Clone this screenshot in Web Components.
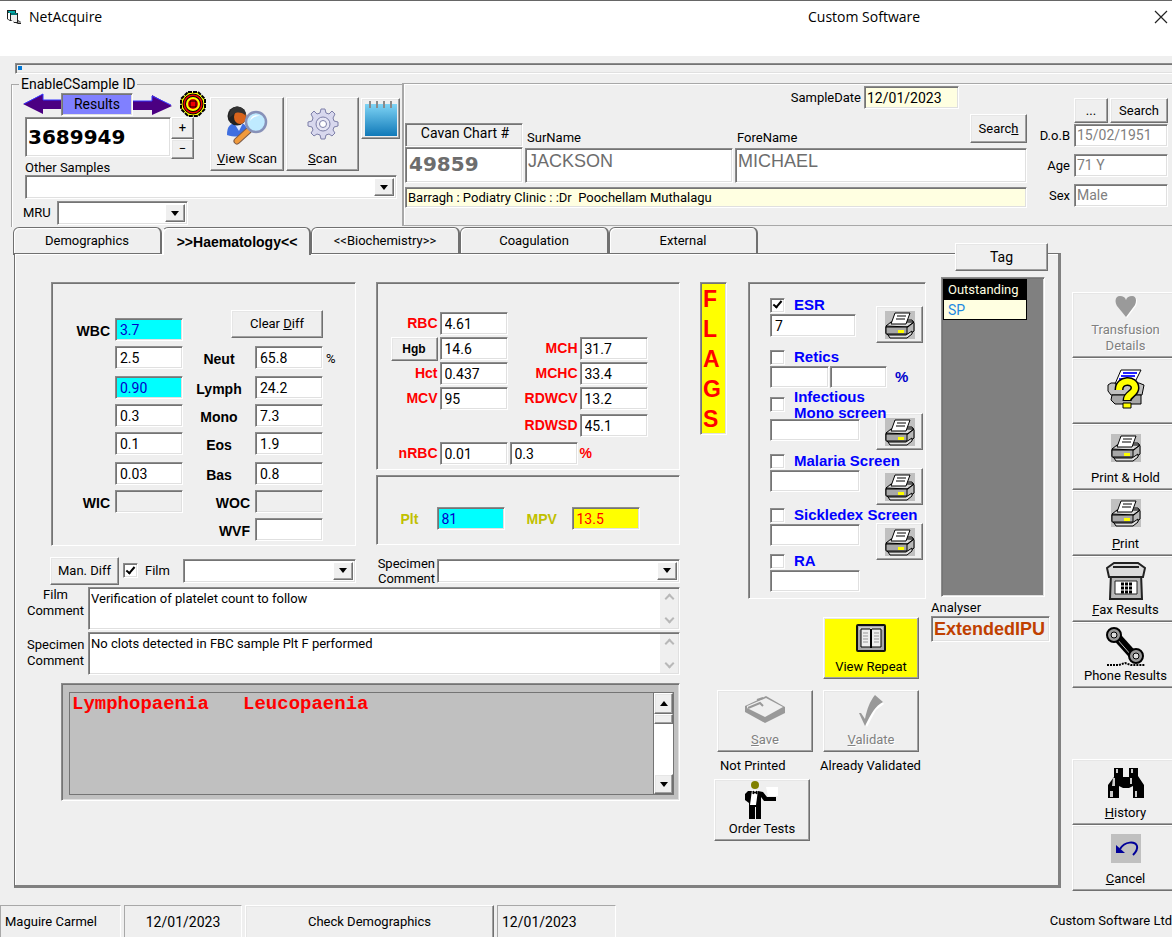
<!DOCTYPE html>
<html lang="en">
<head>
<meta charset="utf-8">
<title>NetAcquire</title>
<style>
  html, body { margin: 0; height: 100%; }
  body { background: #efefef; color: #000; font: 13px/16px Roboto, "Liberation Sans", sans-serif; overflow-x: hidden; }
</style>
</head>
<body>
<net-acquire></net-acquire>
<script>
/* Shared classic-look rules, included in every shadow root */
const BASE = `
  * { box-sizing: border-box; }
  :host { display: block; box-sizing: border-box; }
  input, textarea, select, button { font: inherit; color: inherit; margin: 0; border-radius: 0; min-width: 0; outline: 0; }
  .sunk, input:not([type=checkbox]), textarea, .combo {
    border: 1px solid #8c8c8c; border-right-color: #fff; border-bottom-color: #fff;
    box-shadow: inset 1px 1px #747474, inset -1px -1px #e0e0e0; }
  input:not([type=checkbox]) { background: #fff; height: 23px; padding: 1px 4px 0; width: 68px; font-size: 14px; }
  button { background: #efefef; padding: 0; border: 1px solid #fff; border-right-color: #707070; border-bottom-color: #707070;
    box-shadow: inset -1px -1px #a0a0a0, inset 1px 1px #e6e6e6; }
  textarea { display: block; resize: none; overflow: hidden; background: #fff; }
  .combo { display: grid; background: #fff; height: 24px; }
  .combo select { grid-area: 1/1; appearance: none; border: 0; background: none; width: 100%; padding: 0 4px; }
  .combo i { grid-area: 1/1; justify-self: end; pointer-events: none; width: 20px; margin: 2px; background: #efefef;
    border: 1px solid #fff; border-right-color: #707070; border-bottom-color: #707070; box-shadow: inset -1px -1px #a0a0a0;
    display: grid; place-items: center; }
  .combo i::after { content: ""; border: 4px solid transparent; border-top: 5px solid #000; border-bottom: 0; }
  input[type=checkbox] { appearance: none; flex: none; width: 15px; height: 15px; background: #fff; display: grid; place-items: center;
    border: 1px solid #8c8c8c; border-right-color: #fff; border-bottom-color: #fff; box-shadow: inset 1px 1px #747474, inset -1px -1px #e0e0e0; }
  input[type=checkbox]:checked::after { content: ""; width: 3px; height: 7px; margin-bottom: 3px; border: solid #000; border-width: 0 2px 2px 0; transform: rotate(40deg); }
  .b { font-family: "Liberation Sans", sans-serif; font-weight: 700; font-size: 14px; }
  .low { background: #0ff !important; color: #00c; }
  .high { background: #ff0 !important; color: #f00; }
`;
function element(name, css, html) {
  const t = document.createElement('template');
  t.innerHTML = `<style>${BASE}${css}</style>${html}`;
  customElements.define(name, class extends HTMLElement {
    constructor() { super(); this.attachShadow({ mode: 'open' }).append(t.content.cloneNode(true)); }
  });
}

const ICONS = {
  app: [16, 16, `<path d="M1 1h9v3h2v7l3 2v2h-3l-2-1H8l-1-2H4L1 10z" fill="#222"/><path d="M2 4h2v7l-2-1z" fill="#fff"/><path d="M2 2h7v2H3z" fill="#0aa"/><path d="M5 6h6v7H8l-3-2z" fill="#eee"/><path d="M5 4h6v2H5z" fill="#077"/><path d="M12 12l3 1v1h-3z" fill="#999"/>`],
  close: [14, 14, `<path d="M1 1l12 12M13 1L1 13" stroke="#222" stroke-width="1.2" fill="none"/>`],
  left: [38, 22, `<path d="M0 11L20 1v6h18v9H20v5z" fill="#4b0082"/><path d="M1 11L20 1v6h18" stroke="#33f" fill="none"/>`],
  right: [39, 22, `<path d="M39 13L19 22v-5H0V8h19V2z" fill="#4b0082"/><path d="M0 8h19V3l19 9" stroke="#33f" fill="none"/>`],
  target: [26, 26, `<path d="M8 1h10l7 7v10l-7 7H8l-7-7V8z" fill="#ff0" stroke="#000" stroke-width="2" stroke-dasharray="4 1"/><circle cx="13" cy="13" r="10" fill="#e00" stroke="#000"/><circle cx="13" cy="13" r="6" fill="none" stroke="#000" stroke-width="4"/><circle cx="13" cy="13" r="6" fill="#e00" stroke="#ff0" stroke-width="2"/><path d="M10 10h6v6h-6z" fill="#e00" stroke="#000"/>`],
  person: [42, 42, `<path d="M1 31c0-9 3-12 11-12s9 3 9 12c-5 2-14 2-20 0z" fill="#3f6fe0"/><path d="M8 19l5 8 4-8z" fill="#dfe9ff"/><circle cx="11" cy="12" r="9.500" fill="#222"/><ellipse cx="14" cy="13" rx="6" ry="7" fill="#d8641c"/><path d="M3 14C3 5 9 1 14 3s6 5 5 8c-4-3-8-3-11-1z" fill="#333"/><path d="M22 27L11 37" stroke="#7a5a4a" stroke-width="7" stroke-linecap="round"/><path d="M22 27L11 37" stroke="#f09a3c" stroke-width="5" stroke-linecap="round"/><circle cx="30" cy="18" r="10" fill="#bfeaff" stroke="#8791b8" stroke-width="2.500"/><path d="M24 17c1-5 5-7 10-5-4 0-7 1-10 5z" fill="#fff"/>`],
  gear: [32, 32, `<g fill="#d8d8ee" stroke="#7d7fa8"><path d="M14 1h4l1 4 3 1 3-3 3 3-2 4 1 3 4 1v4l-4 1-1 3 2 3-3 3-3-2-3 1-1 4h-4l-1-4-3-1-3 2-3-3 2-3-1-3-4-1v-4l4-1 1-3-2-4 3-3 3 3 3-1z"/><circle cx="16" cy="16" r="7" fill="#e6e6f4"/><circle cx="16" cy="16" r="3.500" fill="#fff"/></g>`],
  note: [36, 38, `<defs><linearGradient id="g" x2="0" y2="1"><stop stop-color="#7fd4f5"/><stop offset="1" stop-color="#1079b8"/></linearGradient></defs><path d="M2 4h32v32H2z" fill="url(#g)"/><g stroke="#8a8a8a" stroke-width="2"><path d="M7 1v7M14 1v7M21 1v7M28 1v7"/></g>`],
  printer: [30, 28, `<path d="M0 0h30v28H0z" fill="#c0c0c0"/><g stroke="#000" stroke-linejoin="round"><path d="M6 13l4-4h17l2 3v8l-6 5H4l-3-3v-7z" fill="#b8b8b8"/><path d="M1 15l5-4h23l-6 5z" fill="#d8d8d8"/><path d="M1 16h21v7H1z" fill="#a8a8a8"/><path d="M3 24h18l6-4v3l-5 4H5z" fill="#e0e0e0"/><path d="M10 2h15l-4 11H6z" fill="#fff"/><path d="M12 5h9M11 8h9" fill="none"/><path d="M22 16l7-5" fill="none"/></g><path d="M13 19h6v3h-6z" fill="#ff0"/>`],
  heart: [22, 22, `<path d="M12 22L3 11C0 5 2 1 6 1c3 0 4 1 6 4 1-3 3-4 6-4 4 0 5 4 3 9z" fill="#fff"/><path d="M11 21L2 10C-1 4 1 0 5 0c3 0 5 1 6 4 1-3 3-4 6-4 4 0 5 4 3 9z" fill="#9a9a9a"/>`],
  query: [38, 40, `<g stroke="#000" stroke-linejoin="round"><path d="M4 14h28l5 2-2 10H4l-3-4v-6z" fill="#c0c0c0"/><path d="M5 26h29v9H8l-4-4z" fill="#a8a8a8"/><path d="M14 1h20l-7 14H8z" fill="#fff"/></g><path d="M16 4h14M14 7h14M12 10h14" stroke="#22f" stroke-width="2"/><path d="M12 21c0-11 16-11 16-2 0 6-8 6-8 13" fill="none" stroke="#000" stroke-width="9"/><path d="M12 21c0-11 16-11 16-2 0 6-8 6-8 12" fill="none" stroke="#ff0" stroke-width="6"/><path d="M16 34h8v5h-8z" fill="#ff0" stroke="#000"/>`],
  fax: [40, 39, `<g stroke="#222"><path d="M5 12h30l1 26H4z" fill="#b8b8b8" stroke-width="2"/><path d="M8 2h24l7 5-2 9H3L1 7z" fill="#dcdcdc" stroke-width="2"/><path d="M7 6h26" stroke-width="2"/><path d="M9 20h22v13H9z" fill="#fff"/></g><path d="M15 23h11M15 27h11M15 31h11" stroke="#000" stroke-width="3" stroke-dasharray="3 1"/>`],
  phone: [40, 40, `<path d="M10 9l18 20" stroke="#000" stroke-width="9"/><path d="M11 12l14 16" stroke="#bbb" stroke-width="1"/><circle cx="8" cy="8" r="7" fill="#999" stroke="#000" stroke-width="2"/><circle cx="8" cy="8" r="3" fill="#ddd" stroke="#000"/><circle cx="30" cy="29" r="7" fill="#999" stroke="#000" stroke-width="2"/><circle cx="30" cy="29" r="3" fill="#ddd" stroke="#000"/><path d="M1 38h12l6-2 6 2h14" stroke="#000" stroke-width="2" stroke-dasharray="2 1" fill="none"/>`],
  binoc: [38, 32, `<path d="M7 1h9v9h6V1h9v8l6 9v13H26V19l-4 2h-6l-4-2v12H1V18l6-8z" fill="#000"/><path d="M9 2h2v4H9zM24 2h2v4h-2zM6 11h2v8H5zM23 11h2v6h-2zM3 24h3v6H3zM28 24h2v6h-2z" fill="#ccc"/>`],
  undo: [30, 29, `<path d="M0 0h30v29H0z" fill="#c0c0c0"/><path d="M5 11v8h9z" fill="#009"/><path d="M9 15c5-8 15-8 17-3 1 4-2 7-4 9" fill="none" stroke="#009" stroke-width="2"/>`],
  book: [30, 28, `<rect x="1" y="1" width="28" height="26" rx="1" fill="#a8a8a8" stroke="#111" stroke-width="2"/><path d="M3 3h24v3H3z" fill="#ccc"/><path d="M5 5h9l1 1 1-1h9v18h-9l-1 1-1-1H5z" fill="#eee" stroke="#000"/><path d="M15 5v18" stroke="#000" stroke-width="2"/><path d="M7 9h5M7 12h5M7 15h5M7 18h5M18 9h5M18 12h5M18 15h5M18 18h5" stroke="#999"/>`],
  save: [42, 28, `<path d="M1 11L22 1l19 11v6L21 28 1 17z" fill="#999"/><path d="M3 11L22 3l17 9-18 10L3 13z" fill="#efefef"/><path d="M4 13l12-5 3 3M13 5l6-2" fill="none" stroke="#999" stroke-width="2"/>`],
  tick: [26, 32, `<path d="M2 18l6 8L18 1l8 8-8 6-9 17z" fill="#fff"/><path d="M1 18l2 0 4 6c2-10 5-18 10-24l8 7c-8 4-12 12-18 24z" fill="#999"/>`],
  waiter: [36, 40, `<path d="M4 10h10l5 1 4 5h9v4H20l-3-4v22h-5V26h-1v12H5V22l-4-3v-6z" fill="#000"/><path d="M8 9h6l-2 15H6z" fill="#fff"/><path d="M9 10l4 3v-3l-4 3z" fill="#000" stroke="#000"/><circle cx="11" cy="4" r="4" fill="#808000"/><path d="M22 6h12v9H24z" fill="#fff"/>`]
};
customElements.define('ui-icon', class extends HTMLElement {
  constructor() { super(); this.attachShadow({ mode: 'open' }); }
  connectedCallback() {
    const [w, h, body] = ICONS[this.getAttribute('name')];
    this.shadowRoot.innerHTML = `<style>:host{display:inline-block;flex:none;line-height:0}</style><svg width="${w}" height="${h}" viewBox="0 0 ${w} ${h}" aria-hidden="true">${body}</svg>`;
  }
});

/* Push button with a picture over its caption */
element('tool-button', `
  :host { display: grid; }
  button { display: flex; flex-direction: column; align-items: center; justify-content: space-between;
    padding: var(--pad, 5px) 0 3px; width: 100%; line-height: 16px; }
  :host([yellow]) button { background: #ff0; }
  :host([dim]) button { color: #808080; text-shadow: 1px 1px #fff; }
`, `<button type="button"><slot name="icon"></slot><span><slot></slot></span></button>`);

element('title-bar', `
  :host { background: #fff; border-top: 1px solid #666; height: 56px; padding: 8px 4px 0 6px; font: 14px/16px "Open Sans", sans-serif; }
  div { display: grid; align-items: center; column-gap: 7px; grid-template-columns: 16px 772px 1fr 14px; }
  button { border: 0; background: none; box-shadow: none; line-height: 0; }
`, `<div><ui-icon name="app"></ui-icon><span>NetAcquire</span><span>Custom Software</span><button aria-label="Close"><ui-icon name="close"></ui-icon></button></div>`);

element('sample-panel', `
  :host { flex: none; width: 391px; }
  fieldset { margin: 0; padding: 0 4px 0 13px; border: 1px solid #a8a8a8; border-width: 1px 0 0 1px; height: 150px; min-width: 0; box-shadow: inset 1px 0 #fff; }
  legend { margin-left: -6px; padding: 0 2px; line-height: 14px; font-size: 14px; }
  .top { display: grid; grid-template-columns: 183px 74px 73px 39px; column-gap: 2px; height: 84px; }
  .res { display: flex; align-items: center; height: 26px; margin-left: -2px; }
  .res span { flex: none; width: 72px; height: 23px; background: #8080ff; text-align: center; line-height: 21px; font-size: 14px; }
  .res > ui-icon { margin-left: 8px; }
  .res button { border: 0; background: none; box-shadow: none; line-height: 0; flex: none; }
  .num { display: flex; height: 43px; }
  .num input:not([type=checkbox]) { width: 146px; height: 40px; font: 700 20px "DejaVu Sans", sans-serif; padding: 0 2px; }
  .num div { display: grid; width: 23px; grid-template-rows: 22px 20px; }
  .num button { line-height: 16px; }
  tool-button { height: 74px; margin-top: 6px; --pad: 6px; }
  .note { margin: 7px 0 0; height: 41px; line-height: 0; overflow: hidden; }
  .mru { display: flex; gap: 6px; margin: 2px 0 0 -2px; align-items: center; }
  .mru .combo { width: 131px; }
  .w { width: 372px; }
`, `<fieldset><legend>EnableCSample ID</legend>
  <div class="top"><div>
    <div class="res"><button aria-label="Previous"><ui-icon name="left"></ui-icon></button><span class="sunk">Results</span><button aria-label="Next"><ui-icon name="right"></ui-icon></button><ui-icon name="target"></ui-icon></div>
    <div class="num"><input aria-label="Sample ID" value="3689949"><div><button>+</button><button>−</button></div></div>
    <label for="o">Other Samples</label></div>
    <tool-button><ui-icon slot="icon" name="person"></ui-icon><u>V</u>iew Scan</tool-button>
    <tool-button style="--pad:10px"><ui-icon slot="icon" name="gear"></ui-icon><u>S</u>can</tool-button>
    <button class="note" aria-label="Notes"><ui-icon name="note"></ui-icon></button></div>
  <span class="combo w"><select id="o"></select><i></i></span>
  <div class="mru"><label for="m">MRU</label><span class="combo"><select id="m"></select><i></i></span></div>
</fieldset>`);

element('patient-panel', `
  :host { flex: 1; min-width: 0; display: flex; gap: 9px; margin-top: 6px; height: 143px; border: solid #a8a8a8; border-width: 1px 0 1px 2px; box-shadow: inset 1px 1px #fff; padding: 2px 4px 0 1px; }
  .main { flex: 1; min-width: 0; }
  .date { display: flex; justify-content: flex-end; align-items: center; gap: 3px; margin-right: 68px; }
  .date input:not([type=checkbox]) { width: 95px; background: #ffffe1; padding: 0 2px; }
  .names { display: grid; grid-template-columns: 118px 208px 1fr; column-gap: 2px; margin-top: 5px; align-items: end; }
  .chart { height: 24px; text-align: center; line-height: 20px; font-size: 14px; }
  .names > input:not([type=checkbox]) { width: 100%; height: 35px; color: #6d6d6d; font: 18px "Liberation Sans", sans-serif; padding: 0 2px 8px; }
  .names > input.id:not([type=checkbox]) { font: 700 20px "DejaVu Sans", sans-serif; height: 36px; padding: 0 3px 2px; }
  .fore { display: flex; justify-content: space-between; align-items: flex-end; }
  .fore button { width: 57px; height: 29px; margin-bottom: 4px; }
  .addr { width: 100% !important; height: 21px !important; background: #ffffe1 !important; padding: 0 2px !important; margin-top: 4px; display: block; font-size: 13px !important; }
  .side { display: grid; grid-template-columns: 34px 94px; grid-template-rows: 26px 30px 30px 30px; column-gap: 4px; align-content: start; justify-items: end; align-items: start; padding-top: 12px; line-height: 23px; }
  .side > div { grid-column: 2; display: grid; grid-template-columns: 34px 58px; gap: 2px; height: 25px; }
  .side input:not([type=checkbox]) { width: 94px; color: #808080; padding: 0 2px; }
  .names label { line-height: 18px; padding-left: 2px; }
`, `<div class="main">
  <div class="date"><label for="d">SampleDate</label><input id="d" value="12/01/2023"></div>
  <div class="names"><label class="chart sunk" for="c">Cavan Chart #</label><label for="s">SurName</label>
    <div class="fore"><label for="f">ForeName</label><button>Searc<u>h</u></button></div>
    <input class="id" id="c" value="49859"><input id="s" value="JACKSON"><input id="f" value="MICHAEL"></div>
  <input class="addr" aria-label="Address" value="Barragh : Podiatry Clinic : :Dr  Poochellam Muthalagu"></div>
 <div class="side"><div><button>...</button><button>Search</button></div>
  <label for="b">D.o.B</label><input id="b" value="15/02/1951"><label for="a">Age</label><input id="a" value="71 Y"><label for="x">Sex</label><input id="x" value="Male"></div>`);

element('white-cells', `
  :host { height: 264px; padding: 35px 0 0 22px; border: 1px solid #8c8c8c; border-right-color: #fff; border-bottom-color: #fff; box-shadow: inset 1px 1px #747474; }
  .g { display: grid; grid-template-columns: 38px 68px 66px 68px 14px; grid-template-rows: 28px 30px 28px 28px 30px 28px 28px 24px; column-gap: 3px; align-items: start; }
  label { line-height: 26px; }
  .b { text-align: center; }
  .r { text-align: right; padding-right: 2px; }
  .off { background: #efefef !important; }
  button { grid-column: 3 / 5; justify-self: end; width: 92px; height: 28px; margin-top: -8px; }
  .c2 { grid-column: 2; }
`, `<div class="g">
  <label class="b r" for="w">WBC</label><input id="w" class="low" value="3.7"><button>Clear <u>D</u>iff</button><span></span>
  <input class="c2" aria-label="Neutrophils" value="2.5"><label class="b" for="n">Neut</label><input id="n" value="65.8"><label for="n">%</label>
  <input class="c2 low" aria-label="Lymphocytes" value="0.90"><label class="b" for="l">Lymph</label><input id="l" value="24.2"><span></span>
  <input class="c2" aria-label="Monocytes" value="0.3"><label class="b" for="m">Mono</label><input id="m" value="7.3"><span></span>
  <input class="c2" aria-label="Eosinophils" value="0.1"><label class="b" for="e">Eos</label><input id="e" value="1.9"><span></span>
  <input class="c2" aria-label="Basophils" value="0.03"><label class="b" for="b">Bas</label><input id="b" value="0.8"><span></span>
  <label class="b r" for="i">WIC</label><input id="i" class="off"><label class="b r" for="o">WOC</label><input id="o" class="off"><span></span>
  <span></span><span></span><label class="b r" for="v">WVF</label><input id="v"><span></span></div>`);

element('red-cells', `
  :host { height: 188px; padding: 29px 0 0 4px; color: #f00; border: 1px solid #8c8c8c; border-right-color: #fff; border-bottom-color: #fff; box-shadow: inset 1px 1px #747474; }
  .g { display: grid; grid-template-columns: 57px 68px 68px 68px; grid-template-rows: 25px 25px 25px 27px 28px; column-gap: 2px; align-items: start; }
  input { color: #000; }
  label, .b { text-align: right; line-height: 22px; }
  button.b { color: #000; font-size: 12px; text-align: center; justify-self: end; width: 47px; height: 24px; line-height: 20px; }
  .c3 { grid-column: 3; }
`, `<div class="g">
  <label class="b" for="r">RBC</label><input id="r" value="4.61"><span></span><span></span>
  <button class="b">Hgb</button><input aria-label="Hgb" value="14.6"><label class="b" for="h">MCH</label><input id="h" value="31.7">
  <label class="b" for="t">Hct</label><input id="t" value="0.437"><label class="b" for="c">MCHC</label><input id="c" value="33.4">
  <label class="b" for="v">MCV</label><input id="v" value="95"><label class="b" for="w">RDWCV</label><input id="w" value="13.2">
  <label class="b c3" for="s">RDWSD</label><input id="s" value="45.1">
  <label class="b" for="n">nRBC</label><input id="n" value="0.01"><input aria-label="nRBC percent" value="0.3"><span class="b" style="text-align:left">%</span></div>`);

element('platelet-counts', `
  :host { height: 70px; margin-top: 5px; padding: 31px 0 0 24px; border: 1px solid #8c8c8c; border-right-color: #fff; border-bottom-color: #fff; box-shadow: inset 1px 1px #747474; }
  div { display: grid; grid-template-columns: 36px 90px 45px 68px; align-items: center; }
  .b { color: #c0c000; }
`, `<div><label class="b" for="p">Plt</label><input id="p" class="low" value="81"><label class="b" for="m">MPV</label><input id="m" class="high" value="13.5"></div>`);

element('comment-area', `
  .opts { display: grid; grid-template-columns: 69px 64px 173px 81px 1fr; align-items: center; margin-left: 23px; height: 33px; }
  .opts button { height: 28px; }
  .film { display: flex; gap: 7px; padding-left: 4px; align-items: center; }
  .opts .r { text-align: right; padding-right: 2px; line-height: 15px; }
  .memo { display: grid; grid-template-columns: 61px 1fr; }
  .memo + .memo { margin-top: 2px; }
  .memo label { text-align: right; padding: 0 4px 0 0; }
  .memo .mid { display: grid; grid-template-columns: auto; justify-content: end; text-align: center; }
  .memo + .memo label { padding-top: 5px; }
  .memo textarea { grid-area: 1/2; width: 100%; height: 43px; padding: 3px 22px 0 2px; }
  .bar { grid-area: 1/2; justify-self: end; width: 18px; margin: 2px; background: #efefef; display: flex; flex-direction: column; justify-content: space-around; align-items: center; }
  .bar i { width: 7px; height: 7px; border: solid #b8b8b8; border-width: 2px 0 0 2px; transform: rotate(45deg); }
  .bar i + i { transform: rotate(225deg); }
  .flags { display: grid; grid-template-columns: 1fr; background: #c0c0c0; height: 118px; margin: 8px 0 0 34px; padding: 8px 5px 5px 7px; }
  .flags textarea { grid-area: 1/1; background: #c0c0c0; height: 103px; color: #f00; padding: 1px 20px 0 2px; font: 700 19px/20px "Liberation Mono", monospace; border-color: #747474; box-shadow: none; }
  .flags div { grid-area: 1/1; justify-self: end; width: 21px; background: #fff; display: grid; grid-template-rows: 21px 10px 1fr 20px; border: 1px solid #747474; height: 103px; }
  .flags div button { display: grid; place-items: center; }
  .up::after, .dn::after { content: ""; border: 4px solid transparent; border-top: 0; border-bottom: 5px solid #000; }
  .dn::after { transform: rotate(180deg); }
`, `<div class="opts"><button>Man. Diff</button><label class="film"><input type="checkbox" checked>Film</label><span class="combo"><select aria-label="Film comment preset"></select><i></i></span>
   <label class="r" for="p">Specimen<br>Comment</label><span class="combo"><select id="p"></select><i></i></span></div>
  <div class="memo"><label class="mid" for="f"><span>Film<br>Comment</span></label><textarea id="f">Verification of platelet count to follow</textarea><span class="bar"><i></i><i></i></span></div>
  <div class="memo"><label for="s">Specimen<br>Comment</label><textarea id="s">No clots detected in FBC sample Plt F performed</textarea><span class="bar"><i></i><i></i></span></div>
  <div class="flags sunk"><textarea aria-label="Interpretive flags">Lymphopaenia   Leucopaenia</textarea><div><button class="up" aria-label="Up"></button><button aria-label="Thumb"></button><span></span><button class="dn" aria-label="Down"></button></div></div>`);

element('screening-tests', `
  :host { width: 178px; height: 317px; display: grid; grid-template-columns: 1fr; padding: 13px 2px 0 21px; border: 1px solid #8c8c8c; border-right-color: #fff; border-bottom-color: #fff; box-shadow: inset 1px 1px #747474; }
  .tests { grid-area: 1/1; display: grid; grid-template-rows: 52px 42px 62px 54px 46px 40px; z-index: 1; pointer-events: none; }
  .tests > div { display: grid; grid-template-columns: 59px 57px 1fr; grid-template-rows: 18px 22px; align-content: start; column-gap: 1px; }
  .tests > .two { grid-template-rows: 29px 22px; }
  .ck { grid-column: 1 / 4; display: flex; gap: 9px; align-items: center; font: 700 15px/16px "Liberation Sans", sans-serif; color: #00f; white-space: nowrap; }
  .ck, .tests input { pointer-events: auto; }
  .tests div > input:not([type=checkbox]) { grid-column: 1 / 3; width: 90px; height: 22px; }
  .tests div.esr > input:not([type=checkbox]) { width: 86px; height: 23px; }
  .tests div.pair > input:not([type=checkbox]) { grid-column: auto; width: auto; }
  .pct { font: 700 15px/22px "Liberation Sans", sans-serif; color: #00c; padding-left: 7px; }
  .prn { grid-area: 1/1; justify-self: end; width: 47px; display: flex; flex-direction: column; gap: 18px; padding-top: 10px; }
  .prn button { display: grid; place-items: center; height: 37px; }
  .prn .gap { margin-top: 52px; }
`, `<div class="prn"><button aria-label="Print ESR"><ui-icon name="printer"></ui-icon></button><button class="gap" aria-label="Print mono screen"><ui-icon name="printer"></ui-icon></button><button aria-label="Print malaria"><ui-icon name="printer"></ui-icon></button><button aria-label="Print sickledex"><ui-icon name="printer"></ui-icon></button></div>
 <div class="tests">
  <div class="esr"><label class="ck"><input type="checkbox" checked>ESR</label><input aria-label="ESR result" value="7"></div>
  <div class="pair"><label class="ck"><input type="checkbox">Retics</label><input aria-label="Retics count"><input aria-label="Retics percent"><span class="pct">%</span></div>
  <div class="two"><label class="ck"><input type="checkbox"><span>Infectious<br>Mono screen</span></label><input aria-label="Mono result"></div>
  <div><label class="ck"><input type="checkbox">Malaria Screen</label><input aria-label="Malaria result"></div>
  <div><label class="ck"><input type="checkbox">Sickledex Screen</label><input aria-label="Sickledex result"></div>
  <div><label class="ck"><input type="checkbox">RA</label><input aria-label="RA result"></div></div>`);

element('action-area', `
  :host { display: grid; grid-template-columns: 96px 96px; column-gap: 10px; margin: 18px 0 0 17px; }
  tool-button { height: 62px; --pad: 6px; }
  .rep { grid-column: 2; margin-bottom: 11px; }
  span { line-height: 27px; padding-left: 3px; white-space: nowrap; }
  .r { margin-left: -6px; }
  .o { margin-left: -3px; margin-right: 3px; --pad: 1px; }
`, `<tool-button class="rep" yellow><ui-icon slot="icon" name="book"></ui-icon>View Repeat</tool-button>
 <tool-button dim style="--pad:4px"><ui-icon slot="icon" name="save"></ui-icon><u>S</u>ave</tool-button><tool-button dim style="--pad:4px"><ui-icon slot="icon" name="tick"></ui-icon><u>V</u>alidate</tool-button>
 <span>Not Printed</span><span class="r">Already Validated</span>
 <tool-button class="o"><ui-icon slot="icon" name="waiter"></ui-icon>Order Tests</tool-button>`);

element('outstanding-list', `
  :host { width: 120px; }
  .list { width: 104px; height: 320px; margin-left: 10px; background: #808080; padding: 1px; }
  table { border-collapse: collapse; width: 84px; font: inherit; text-align: left; }
  th, td { height: 20px; padding: 0 0 0 4px; font-weight: 400; border: 1px solid #000; font-size: 13px; }
  th { background: #000; color: #ffffe1; } td { background: #ffffe1; color: #1e8ae0; font-size: 14px; }
  label { display: block; line-height: 17px; margin-top: 2px; }
  input:not([type=checkbox]) { width: 119px; height: 26px; background: #efefef; color: #c04000; font: 700 18px "Liberation Sans", sans-serif; padding: 0 2px; }
`, `<div class="list sunk"><table><tr><th>Outstanding</th></tr><tr><td>SP</td></tr></table></div><label for="a">Analyser</label><input id="a" value="ExtendedIPU">`);

element('result-tabs', `
  :host { flex: 1; min-width: 0; display: flex; flex-direction: column; margin-bottom: 3px; }
  .tabs { display: grid; grid-template-columns: repeat(5, 149px); height: 26px; margin-left: -1px; }
  .tabs button { border: 1px solid #707070; border-width: 1px 2px 1px 1px; border-radius: 6px 6px 0 0; box-shadow: inset 1px 1px #fff; line-height: 22px; padding-bottom: 1px; }
  .tabs .on { border-bottom: 0; border-left-color: #fff; font: 700 14px/24px "Liberation Sans", sans-serif; padding: 0 0 0 2px; height: 28px; position: relative; z-index: 1; }
  .page { flex: 1; display: flex; border: 1px solid #707070; border-width: 1px 3px 3px 1px; box-shadow: inset 1px 1px #fff; border-right-color: #808080; border-bottom-color: #808080; padding: 28px 7px 8px 12px; position: relative; }
  .tag { position: absolute; right: 10px; top: -11px; width: 93px; height: 28px; font-size: 14px; }
  .left { flex: 1; min-width: 0; margin-right: 20px; }
  .cells { display: grid; grid-template-columns: 1fr 1fr; gap: 20px; margin: 0 0 8px 24px; }
  .mid { width: 226px; margin-right: 5px; }
  .up { display: flex; justify-content: space-between; align-items: flex-start; }
  .flg { width: 27px; height: 153px; background: #ff0; color: #f00; font: 700 23px/30px "Liberation Sans", sans-serif; padding: 1px 2px; }
  outstanding-list { margin-top: -5px; }
  action-area { margin-top: 18px; }
`, `<div class="tabs" role="tablist"><button role="tab">Demographics</button><button role="tab" class="on" aria-selected="true">&gt;&gt;Haematology&lt;&lt;</button><button role="tab">&lt;&lt;Biochemistry&gt;&gt;</button><button role="tab">Coagulation</button><button role="tab">External</button></div>
 <div class="page"><button class="tag">Tag</button>
  <div class="left"><div class="cells"><white-cells></white-cells><div><red-cells></red-cells><platelet-counts></platelet-counts></div></div><comment-area></comment-area></div>
  <div class="mid"><div class="up"><div class="flg sunk">F<br>L<br>A<br>G<br>S</div><screening-tests></screening-tests></div><action-area></action-area></div>
  <outstanding-list></outstanding-list></div>`);

element('side-tools', `
  :host { flex: none; width: 107px; margin: 65px -7px 0 0; }
  tool-button { height: 66px; }
  .hist { margin-top: 71px; }
`, `<tool-button dim style="--pad:3px"><ui-icon slot="icon" name="heart"></ui-icon>Transfusion<br>Details</tool-button>
 <tool-button style="--pad:10px"><ui-icon slot="icon" name="query"></ui-icon></tool-button>
 <tool-button style="--pad:9px"><ui-icon slot="icon" name="printer"></ui-icon>Print &amp; Hold</tool-button>
 <tool-button style="--pad:8px"><ui-icon slot="icon" name="printer"></ui-icon><u>P</u>rint</tool-button>
 <tool-button style="--pad:4px"><ui-icon slot="icon" name="fax"></ui-icon><u>F</u>ax Results</tool-button>
 <tool-button style="--pad:4px"><ui-icon slot="icon" name="phone"></ui-icon>Phone Results</tool-button>
 <tool-button class="hist" style="--pad:7px"><ui-icon slot="icon" name="binoc"></ui-icon><u>H</u>istory</tool-button>
 <tool-button style="--pad:8px"><ui-icon slot="icon" name="undo"></ui-icon><u>C</u>ancel</tool-button>`);

element('status-line', `
  :host { display: grid; grid-template-columns: 121px 118px 249px 119px 1fr; column-gap: 3px; height: 32px; line-height: 32px; margin-top: 14px; }
  div { border: 1px solid #a8a8a8; border-right-color: #fff; border-bottom: 0; padding-left: 4px; }
  .d { font-size: 14px; }
  .c { text-align: center; padding: 0; }
  span { justify-self: end; white-space: nowrap; }
`, `<div>Maguire Carmel</div><div class="c d">12/01/2023</div><button>Check Demographics</button><div class="d">12/01/2023</div><span>Custom Software Ltd</span>`);

element('net-acquire', `
  :host { min-height: 100vh; display: flex; flex-direction: column; overflow: hidden; }
  .prog { height: 11px; margin: 7px -2px 0 15px; padding: 2px; }
  .prog i { display: block; width: 4px; height: 4px; background: #0078d7; }
  header { display: flex; margin: 3px 0 0 11px; }
  main { flex: 1; display: flex; gap: 11px; margin-left: 14px; }
`, `<title-bar></title-bar><div class="prog sunk"><i></i></div>
 <header><sample-panel></sample-panel><patient-panel></patient-panel></header>
 <main><result-tabs></result-tabs><side-tools></side-tools></main><status-line></status-line>`);
</script>
</body>
</html>
